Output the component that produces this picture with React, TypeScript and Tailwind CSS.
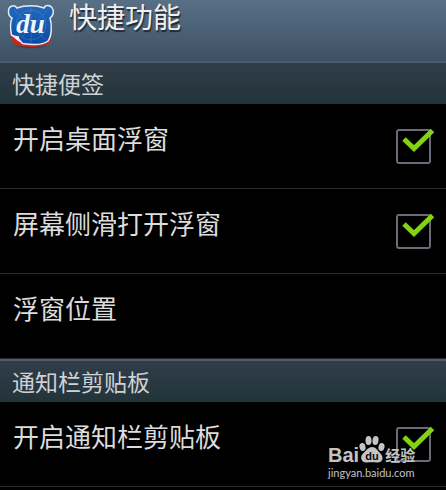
import { useState } from "react"

type Item = {
  id: string
  label: string
  checkable: boolean
}

type Section = {
  title: string
  items: Item[]
}

const SECTIONS: Section[] = [
  {
    title: "快捷便签",
    items: [
      { id: "desktop", label: "开启桌面浮窗", checkable: true },
      { id: "slide", label: "屏幕侧滑打开浮窗", checkable: true },
      { id: "position", label: "浮窗位置", checkable: false },
    ],
  },
  {
    title: "通知栏剪贴板",
    items: [{ id: "clipboard", label: "开启通知栏剪贴板", checkable: true }],
  },
]

export default function App() {
  const [checked, setChecked] = useState<Record<string, boolean>>({
    desktop: true,
    slide: true,
    clipboard: true,
  })

  return (
    <div className="min-h-screen bg-black font-['Noto_Sans_CJK_SC',sans-serif] text-[#dcdcdc]">
      <div className="relative">
        <header className="flex h-[61px] items-start gap-[14px] bg-linear-to-b from-[#587085] to-[#3e5164] pl-[7px]">
          <BearLogo />
          <h1 className="text-[28px] leading-8 text-[#f0f0f0] [text-shadow:1px_2px_1px_#1e2a35]">
            快捷功能
          </h1>
        </header>

        {SECTIONS.map((section) => (
          <section key={section.title}>
            <h2 className="h-[43px] border-t-2 border-[#4d5e6b] bg-linear-to-b from-[#303d49] to-[#22343a] pl-3 text-[23px] leading-10 text-[#cfd2d4]">
              {section.title}
            </h2>
            <ul>
              {section.items.map((item) => (
                <li key={item.id} className="h-[85px] border-b border-[#2b2b2b]">
                  {item.checkable ? (
                    <label
                      htmlFor={item.id}
                      className="flex h-full items-center justify-between pr-[15px] pl-[13px]"
                    >
                      <span className="pb-4 text-[26px] leading-8">{item.label}</span>
                      <CheckBox
                        id={item.id}
                        checked={checked[item.id]}
                        onChange={(value) => setChecked({ ...checked, [item.id]: value })}
                      />
                    </label>
                  ) : (
                    <button className="flex h-full w-full items-center pl-[13px] text-left">
                      <span className="pb-4 text-[26px] leading-8">{item.label}</span>
                    </button>
                  )}
                </li>
              ))}
            </ul>
          </section>
        ))}

        <Watermark />
      </div>
    </div>
  )
}

function CheckBox({
  id,
  checked,
  onChange,
}: {
  id: string
  checked: boolean
  onChange: (value: boolean) => void
}) {
  return (
    <span className="relative size-[35px] shrink-0">
      <input
        id={id}
        type="checkbox"
        checked={checked}
        onChange={(e) => onChange(e.target.checked)}
        className="block size-full appearance-none rounded-[3px] border-2 border-[#676c76] bg-black"
      />
      {checked && (
        <svg
          viewBox="0 0 40 35"
          className="pointer-events-none absolute top-0 left-0 h-[35px] w-10 overflow-visible"
          fill="none"
          stroke="#82d411"
          strokeWidth="5"
        >
          <path d="M8 10 L18 19.500 L36.500 1.500" />
        </svg>
      )}
    </span>
  )
}

function BearLogo() {
  return (
    <svg viewBox="0 0 48 50" className="h-[50px] w-12 shrink-0" aria-hidden="true">
      <defs>
        <linearGradient id="face" x1="0" y1="0" x2="0" y2="1">
          <stop offset="0" stopColor="#2169bd" />
          <stop offset="1" stopColor="#0b4ba5" />
        </linearGradient>
        <radialGradient id="shade">
          <stop offset="0" stopColor="#17212b" stopOpacity="0.8" />
          <stop offset="1" stopColor="#17212b" stopOpacity="0" />
        </radialGradient>
      </defs>
      <ellipse cx="24" cy="46" rx="18" ry="3" fill="url(#shade)" />
      {/* red lining under the peeled corner */}
      <path
        d="M3.500 32 C3 40 7 45.500 16 46.500 C24 47.500 37 47 42 43 C44 41 45 39 44.500 37 L38 38 Z"
        fill="#d3211b"
      />
      <path
        d="M10 8 C7 4 1 6 1.500 12 C1.500 15 3 17 5 18 C3 23 3.500 30 4.500 35 C9 37 13 40 15.500 43.500 C25 45 36 45 41 41 C45 36 45 24 43 18 C46 16 47.500 12 45.500 8.500 C43 4 38 5 37 8 C29 5 18 5 10 8 Z"
        fill="url(#face)"
        stroke="#e3ebf3"
        strokeWidth="1.500"
      />
      <g fill="none" stroke="#5d9ad8" strokeOpacity="0.4" strokeWidth="0.800">
        <circle cx="24" cy="25" r="15" />
        <path d="M24 7 V43 M8 11 L39 40 M40 11 L16 36" />
      </g>
      <path
        d="M4.500 35 C7 36 10 35.500 12 36.500 C12 39 13 42 16 43.500 C12 42 8 39 4.500 35 Z"
        fill="#eef1f4"
      />
      <text
        x="23.500"
        y="33"
        textAnchor="middle"
        fontFamily="Liberation Serif, serif"
        fontStyle="italic"
        fontWeight="bold"
        fontSize="27"
        fill="#f0f4fa"
      >
        du
      </text>
    </svg>
  )
}

function Watermark() {
  return (
    <div className="pointer-events-none absolute right-7 bottom-2 w-[90px] text-[#c4c4c4]">
      <div className="flex h-8 items-end">
        <span className="font-['Liberation_Sans',sans-serif] text-[20px] leading-6 font-bold">
          Bai
        </span>
        <svg viewBox="0 0 26 28" className="mb-1 h-7 w-[26px] shrink-0" fill="currentColor">
          <ellipse cx="3.500" cy="12" rx="3" ry="4" transform="rotate(-12 3.5 12)" />
          <ellipse cx="9.500" cy="5.500" rx="3" ry="4.500" />
          <ellipse cx="16.500" cy="5.500" rx="3" ry="4.500" transform="rotate(8 16.5 5.5)" />
          <ellipse cx="22.500" cy="12" rx="3" ry="4" transform="rotate(12 22.5 12)" />
          <path d="M13 12 C17 12 18 15 21 18 C26 23 23 28 18 27.500 C15 27 11 27 8 27.500 C3 28 0 23 4 18.500 C7 16 9 12 13 12 Z" />
          <text
            x="13"
            y="25"
            textAnchor="middle"
            fontFamily="Liberation Sans, sans-serif"
            fontWeight="bold"
            fontSize="11"
            fill="#080808"
          >
            du
          </text>
        </svg>
        <span className="text-[15px] leading-6 font-bold whitespace-nowrap">经验</span>
      </div>
      <p className="font-['Lato',sans-serif] text-[11px] leading-3 whitespace-nowrap">
        jingyan.baidu.com
      </p>
    </div>
  )
}
